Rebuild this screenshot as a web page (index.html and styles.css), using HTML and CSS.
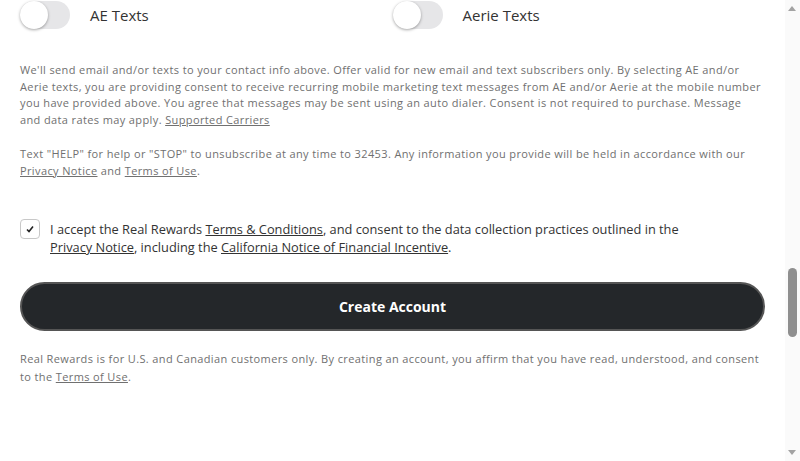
FILE: index.html
```html
<!DOCTYPE html>
<html>
<head>
<meta charset="utf-8">
<link rel="stylesheet" href="styles.css">
</head>
<body>
<div class="page">
  <main class="content">
    <div class="toggles">
      <label class="toggle"><span class="track"><span class="knob"></span></span><span class="toggle-label">AE Texts</span></label>
      <label class="toggle"><span class="track"><span class="knob"></span></span><span class="toggle-label">Aerie Texts</span></label>
    </div>
    <p class="fine p1">We'll send email and/or texts to your contact info above. Offer valid for new email and text subscribers only. By selecting AE and/or Aerie texts, you are providing consent to receive recurring mobile marketing text messages from AE and/or Aerie at the mobile number you have provided above. You agree that messages may be sent using an auto dialer. Consent is not required to purchase. Message and data rates may apply. <a href="#">Supported Carriers</a></p>
    <p class="fine p2">Text "HELP" for help or "STOP" to unsubscribe at any time to 32453. Any information you provide will be held in accordance with our <a href="#">Privacy Notice</a> and <a href="#">Terms of Use</a>.</p>
    <div class="accept">
      <span class="checkbox"><svg width="8" height="8" viewBox="0 0 8 8"><path d="M1 4.5 L3 6.5 L7 1.5" fill="none" stroke="#222" stroke-width="1.6"/></svg></span>
      <p class="accept-text">I accept the Real Rewards <a href="#">Terms &amp; Conditions</a>, and consent to the data collection practices outlined in the <a href="#">Privacy Notice</a>, including the <a href="#">California Notice of Financial Incentive</a>.</p>
    </div>
    <button class="create">Create Account</button>
    <p class="fine p3">Real Rewards is for U.S. and Canadian customers only. By creating an account, you affirm that you have read, understood, and consent to the <a href="#">Terms of Use</a>.</p>
  </main>
  <div class="scrollbar">
    <span class="arrow up"></span>
    <span class="thumb"></span>
    <span class="arrow down"></span>
  </div>
</div>
</body>
</html>
```
FILE: styles.css
```css
html, body {
  margin: 0;
  padding: 0;
  height: 100%;
  overflow: hidden;
  background: #fff;
}
.page {
  display: flex;
  height: 461px;
  font-family: "Open Sans", "Liberation Sans", sans-serif;
}
.content {
  flex: 1;
  padding: 1px 20px 0 20px;
  display: flex;
  flex-direction: column;
}
.toggles {
  display: grid;
  grid-template-columns: 1fr 1fr;
}
.toggle {
  display: flex;
  align-items: center;
  gap: 20px;
}
.track {
  display: block;
  width: 50px;
  height: 28px;
  border-radius: 14px;
  background: #e6e6e8;
  position: relative;
}
.knob {
  position: absolute;
  left: 0;
  top: 0;
  width: 28px;
  height: 28px;
  border-radius: 50%;
  background: #fff;
  box-shadow: 0 1px 3px rgba(0,0,0,0.35);
}
.toggle-label {
  font-size: 15px;
  color: #333;
}
.fine {
  margin: 0;
  font-size: 11px;
  letter-spacing: 0.38px;
  line-height: 16.5px;
  color: #707070;
}
.fine a {
  color: #707070;
  text-decoration: underline;
}
.p1 { margin-top: 33px; }
.p2 { margin-top: 17px; line-height: 17px; }
.accept {
  margin-top: 40px;
  display: flex;
  align-items: flex-start;
  gap: 10px;
}
.checkbox {
  flex: none;
  width: 18px;
  height: 18px;
  border: 1px solid #c8c8c8;
  border-radius: 4px;
  display: flex;
  align-items: center;
  justify-content: center;
}
.accept-text {
  margin: 1px 0 0 0;
  font-size: 12.8px;
  line-height: 18px;
  color: #333;
  padding-right: 60px;
}
.accept-text a { color: #333; text-decoration: underline; }
.create {
  margin-top: 26px;
  height: 49px;
  width: 100%;
  border: 2px solid #555;
  border-radius: 25px;
  background: #24272a;
  color: #fff;
  font-family: "Open Sans", "Liberation Sans", sans-serif;
  font-weight: 700;
  font-size: 14px;
}
.p3 { margin-top: 19px; line-height: 18px; }
.scrollbar {
  width: 15px;
  background: #fafafa;
  position: relative;
}
.thumb {
  position: absolute;
  left: 3px;
  top: 268px;
  width: 9px;
  height: 69px;
  border-radius: 5px;
  background: #8f8f8f;
}
.arrow {
  position: absolute;
  left: 3px;
  width: 0;
  height: 0;
  border-left: 4.5px solid transparent;
  border-right: 4.5px solid transparent;
}
.arrow.up { top: 6px; border-bottom: 5px solid #a3a3a3; }
.arrow.down { top: 450px; border-top: 5px solid #a3a3a3; }
```
